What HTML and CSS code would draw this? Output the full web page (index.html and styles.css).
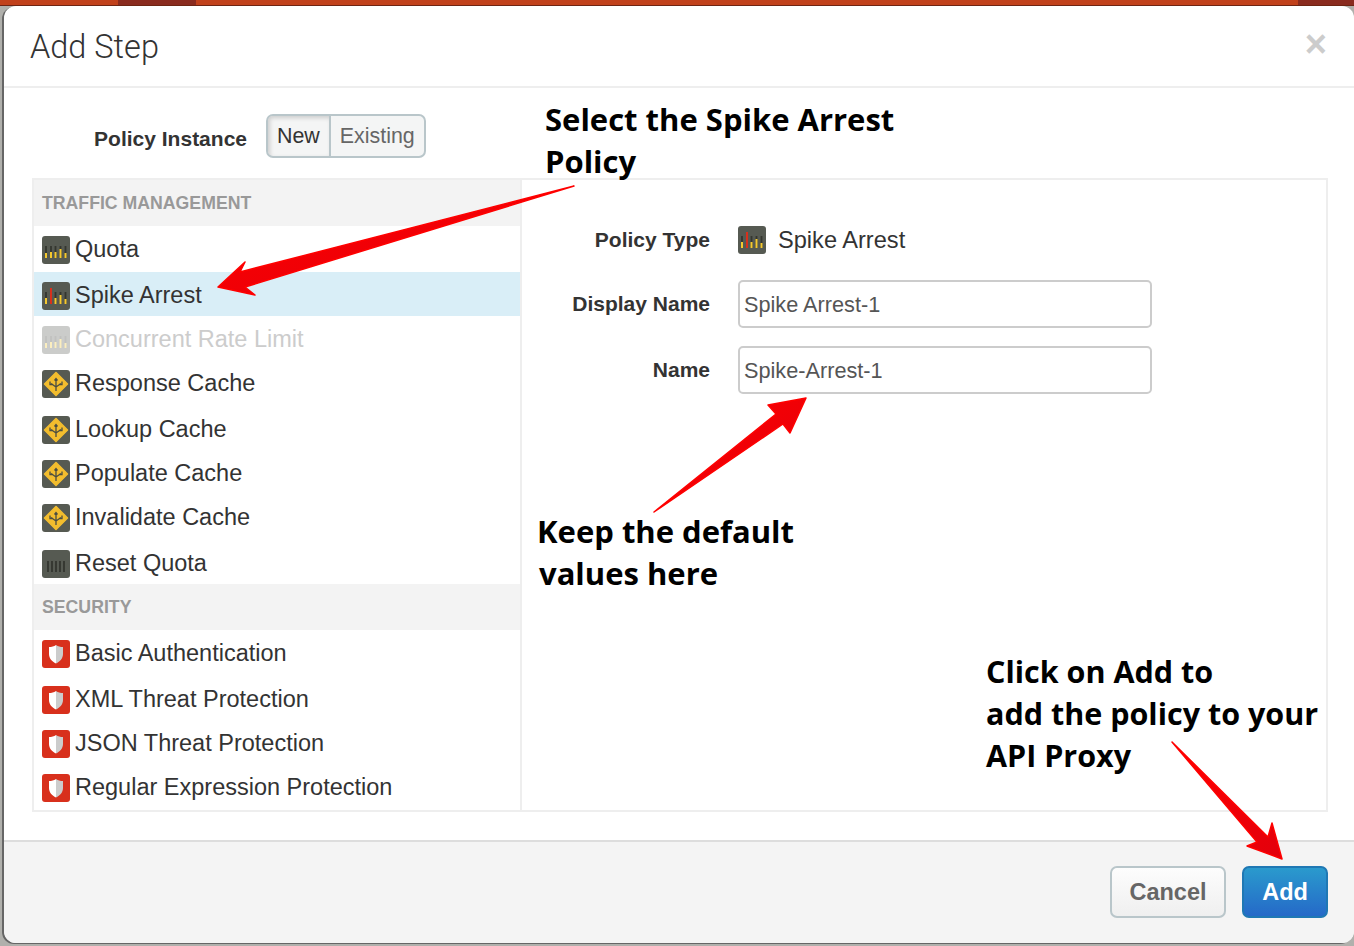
FILE: index.html
```html
<!DOCTYPE html>
<html lang="en">
<head>
    <meta charset="UTF-8">
    <meta name="viewport" content="width=device-width, initial-scale=1.0">
    <title>Add Step</title>
    <link rel="stylesheet" href="styles.css">
</head>
<body>
    <!-- shared icons -->
    <svg class="sprite" width="0" height="0">
        <defs>
            <linearGradient id="arrowFill" x1="0" y1="0" x2="1" y2="1">
                <stop offset="0" stop-color="#f00"/>
                <stop offset="1" stop-color="#e2000c"/>
            </linearGradient>
        </defs>
        <symbol id="iconQuota" viewBox="0 0 28 28">
            <rect width="28" height="28" rx="3" fill="#565a52"/>
            <path d="M4 10v12M9 10v12M13.500 10v12M18.500 10v12M23.500 10v12" stroke="#34362f" stroke-width="1.800"/>
            <path d="M4 17v5M9 16v6M13.500 16v6M18.500 13v9M23.500 17v5" stroke="#f5c92e" stroke-width="2"/>
        </symbol>
        <symbol id="iconSpike" viewBox="0 0 28 28">
            <rect width="28" height="28" rx="3" fill="#565a52"/>
            <path d="M4 10v12M9 10v12M13.500 10v12M18.500 10v12M23.500 10v12" stroke="#34362f" stroke-width="1.800"/>
            <path d="M4 16v6M13.500 16v6M18.500 13v9M23.500 17v5" stroke="#f5c92e" stroke-width="2"/>
            <path d="M9 6v16" stroke="#d8301c" stroke-width="2"/>
        </symbol>
        <symbol id="iconCache" viewBox="0 0 28 28">
            <rect width="28" height="28" rx="3" fill="#565a52"/>
            <path d="M14 2.500 25.500 14 14 25.500 2.500 14z" fill="#f3bd2e" stroke="#f3bd2e" stroke-width="1.500" stroke-linejoin="round"/>
            <path d="M14 21v-11M14 17l-5-3.500M14 17l5-3.500M12.500 10.500 14 8.500l1.500 2M8 11.500v3h3M20 11.500v3h-3" fill="none" stroke="#4b4d42" stroke-width="1.300"/>
        </symbol>
        <symbol id="iconReset" viewBox="0 0 28 28">
            <rect width="28" height="28" rx="3" fill="#565a52"/>
            <path d="M6 11v11M10 11v11M14 11v11M18 11v11M22 11v11" stroke="#2f312b" stroke-width="1.600"/>
        </symbol>
        <symbol id="iconShield" viewBox="0 0 28 28">
            <rect width="28" height="28" rx="3" fill="#d8301c"/>
            <path d="M14 5c2 1.500 4.500 2 7 2v7c0 4.500-3 7.500-7 9.500z" fill="#ccc"/>
            <path d="M14 5c-2 1.500-4.500 2-7 2v7c0 4.500 3 7.500 7 9.500z" fill="#fff"/>
        </symbol>
    </svg>

    <div class="backdrop">
        <div class="seg"></div>
        <div class="seg seg-dark seg-menu"></div>
        <div class="seg seg-wide"></div>
        <div class="seg seg-dark"></div>
    </div>

    <div class="modal">
        <div class="modal-header">
            <h1>Add Step</h1>
            <span class="close">×</span>
        </div>

        <div class="modal-body">
            <div class="instance-row">
                <span class="instance-label">Policy Instance</span>
                <div class="toggle">
                    <span class="toggle-btn active">New</span>
                    <span class="toggle-btn">Existing</span>
                </div>
            </div>

            <div class="panel">
                <div class="policy-list">
                    <div class="group-title">TRAFFIC MANAGEMENT</div>
                    <div class="policy tall"><svg class="icon"><use href="#iconQuota"/></svg>Quota</div>
                    <div class="policy selected"><svg class="icon"><use href="#iconSpike"/></svg>Spike Arrest</div>
                    <div class="policy disabled"><svg class="icon"><use href="#iconQuota"/></svg>Concurrent Rate Limit</div>
                    <div class="policy tall"><svg class="icon"><use href="#iconCache"/></svg>Response Cache</div>
                    <div class="policy"><svg class="icon"><use href="#iconCache"/></svg>Lookup Cache</div>
                    <div class="policy"><svg class="icon"><use href="#iconCache"/></svg>Populate Cache</div>
                    <div class="policy tall"><svg class="icon"><use href="#iconCache"/></svg>Invalidate Cache</div>
                    <div class="policy"><svg class="icon"><use href="#iconReset"/></svg>Reset Quota</div>
                    <div class="group-title">SECURITY</div>
                    <div class="policy tall"><svg class="icon"><use href="#iconShield"/></svg>Basic Authentication</div>
                    <div class="policy"><svg class="icon"><use href="#iconShield"/></svg>XML Threat Protection</div>
                    <div class="policy"><svg class="icon"><use href="#iconShield"/></svg>JSON Threat Protection</div>
                    <div class="policy tall"><svg class="icon"><use href="#iconShield"/></svg>Regular Expression Protection</div>
                </div>

                <div class="details">
                    <div class="field field-type">
                        <label>Policy Type</label>
                        <div class="type-value"><svg class="icon"><use href="#iconSpike"/></svg>Spike Arrest</div>
                    </div>
                    <div class="field">
                        <label for="displayName">Display Name</label>
                        <input id="displayName" type="text" value="Spike Arrest-1">
                    </div>
                    <div class="field">
                        <label for="policyName">Name</label>
                        <input id="policyName" type="text" value="Spike-Arrest-1">
                    </div>
                </div>
            </div>
        </div>

        <div class="modal-footer">
            <button class="btn">Cancel</button>
            <button class="btn btn-primary">Add</button>
        </div>
    </div>

    <!-- screenshot annotations drawn over the dialog -->
    <svg class="arrows" width="1354" height="946" viewBox="0 0 1354 946">
        <path d="M574 186 240 272 245 262 218 287 255 295 245 287z" />
        <path d="M654 512 776 414 768 405 806 398 790 433 783 424z" />
        <path d="M1172 742 1268 837 1272 823 1282 859 1247 846 1257 842z" />
    </svg>
    <div class="note note-select">Select the Spike Arrest<br>Policy</div>
    <div class="note note-keep">Keep the default<br><span class="note-indent">values here</span></div>
    <div class="note note-click">Click on Add to<br>add the policy to your<br>API Proxy</div>
</body>
</html>
```

FILE: styles.css
```css
* {
    box-sizing: border-box;
}
html, body {
    margin: 0;
    height: 946px;
    overflow: hidden;
}
body {
    position: relative;
    padding-left: 4px;
    background-color: #b0b0ac;
    font-family: "Liberation Sans", Arial, sans-serif;
    color: #333;
}
.sprite {
    position: absolute;
}
.backdrop {
    display: flex;
    height: 6px;
    margin-left: -4px;
    border-bottom: 1px solid #6e2413;
}
.seg {
    width: 118px;
    background-color: #c1411b;
}
.seg-dark {
    width: 78px;
    background-color: #8a2b1f;
}
.seg-wide {
    width: 1102px;
}
.seg-dark:last-child {
    width: 56px;
}
.modal {
    width: 1350px;
    height: 937px;
    background-color: #fff;
    border-radius: 12px;
    box-shadow: -2px 1px 0 #666;
    overflow: hidden;
    display: flex;
    flex-direction: column;
}
.modal-header {
    height: 82px;
    flex: none;
    border-bottom: 2px solid #eee;
    display: flex;
    align-items: center;
    justify-content: space-between;
    padding: 0 27px 0 26px;
}
.modal-header h1 {
    margin: 2px 0 0;
    font-family: Roboto, sans-serif;
    font-size: 32.500px;
    font-weight: 300;
    color: #333;
}
.close {
    margin-bottom: 4px;
    font-size: 38px;
    font-weight: 700;
    line-height: 1;
    color: #ccc;
}
.modal-body {
    flex: 1;
    padding: 26px 26px 0 28px;
}
.instance-row {
    display: flex;
    align-items: center;
    height: 44px;
    margin-bottom: 20px;
}
.instance-label {
    width: 215px;
    text-align: right;
    font-size: 21px;
    font-weight: 700;
    margin-top: 5px;
}
.toggle {
    display: flex;
    height: 44px;
    margin-left: 19px;
    border: 2px solid #b9c6ca;
    border-radius: 7px;
    background-color: #f4f5f5;
    overflow: hidden;
}
.toggle-btn {
    display: flex;
    align-items: center;
    padding: 0 9px;
    font-size: 21.400px;
    color: #666;
}
.toggle-btn.active {
    border-right: 2px solid #b9c6ca;
    color: #333;
    box-shadow: inset 2px 2px 4px #ccc;
}
.panel {
    display: flex;
    height: 634px;
    border: 2px solid #eee;
}
.policy-list {
    width: 488px;
    flex: none;
    border-right: 2px solid #eee;
}
.group-title {
    height: 46px;
    display: flex;
    align-items: center;
    padding: 1px 0 0 8px;
    background-color: #f3f3f3;
    font-size: 17.700px;
    font-weight: 700;
    color: #999;
}
.policy {
    height: 44px;
    display: flex;
    align-items: center;
    padding: 3px 0 0 8px;
    font-size: 23.500px;
}
.policy.tall {
    height: 46px;
    padding-top: 1px;
}
.policy.selected {
    background-color: #d9eef7;
}
.policy.disabled {
    color: #ccc;
}
.policy.disabled .icon {
    opacity: 0.3;
}
.icon {
    width: 28px;
    height: 28px;
    flex: none;
    margin-right: 5px;
}
.details {
    flex: 1;
    padding-top: 38px;
}
.field {
    display: flex;
    align-items: center;
    height: 48px;
    margin-bottom: 18px;
}
.field-type {
    height: 44px;
}
.field label {
    width: 188px;
    text-align: right;
    font-size: 21px;
    font-weight: 700;
    margin-right: 28px;
}
.type-value {
    display: flex;
    align-items: center;
    font-size: 23.600px;
}
.type-value .icon {
    margin-right: 12px;
}
.field input {
    width: 414px;
    height: 48px;
    padding: 2px 5px 0 4px;
    border: 2px solid #ccc;
    border-radius: 5px;
    background-color: #fff;
    font-family: "Liberation Sans", Arial, sans-serif;
    font-size: 21.700px;
    color: #555;
}
.modal-footer {
    height: 103px;
    flex: none;
    display: flex;
    justify-content: flex-end;
    gap: 16px;
    padding: 24px 26px 0 0;
    border-top: 2px solid #ddd;
    background-color: #f4f4f4;
}
.btn {
    width: 116px;
    height: 52px;
    border: 2px solid #b9c6ca;
    border-radius: 7px;
    background: linear-gradient(#fdfdfd, #efefef);
    font-family: "Liberation Sans", Arial, sans-serif;
    font-size: 23.500px;
    font-weight: 700;
    color: #666;
}
.btn-primary {
    width: 86px;
    border-color: #1f78b4;
    background: linear-gradient(#2a9acd, #2569c8);
    color: #fff;
}
.arrows {
    position: absolute;
    left: 0;
    top: 0;
    fill: url(#arrowFill);
    stroke: #f00;
    stroke-width: 1.500;
    stroke-linejoin: round;
}
.note {
    position: absolute;
    font-family: "Open Sans", sans-serif;
    font-size: 31px;
    font-weight: 700;
    line-height: 42px;
    color: #000;
    white-space: nowrap;
}
.note-indent {
    margin-left: 2px;
}
.note-select {
    left: 545px;
    top: 98px;
}
.note-keep {
    left: 537px;
    top: 510px;
}
.note-click {
    left: 986px;
    top: 650px;
    font-size: 30.500px;
}
```
